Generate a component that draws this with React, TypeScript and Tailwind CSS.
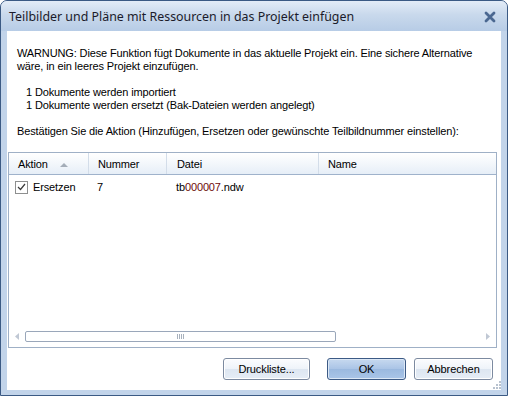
import React from "react";

const body = { fontFamily: '"Liberation Sans", Arial, sans-serif' };

function Btn({ label, def }: { label: string; def?: boolean }) {
  return (
    <div
      className={
        "w-[79px] h-[22px] flex items-center justify-center rounded-[3px] border text-[11px] text-black tracking-[-0.1px] " +
        (def
          ? "border-[#3c5a85] bg-[linear-gradient(#c7d9ef,#aac4e6_50%,#9bb9df_51%,#a9c5e8)] shadow-[inset_0_0_0_1px_#dce8f6]"
          : "border-[#7c8aa0] bg-[linear-gradient(#fbfcfe,#eef3f9_50%,#dde6f1_51%,#e6edf6)] shadow-[inset_0_0_0_1px_#ffffff]")
      }
    >
      {label}
    </div>
  );
}

export default function App() {
  return (
    <div className="w-[508px] h-[396px] bg-white" style={body}>
      <div className="w-[508px] h-[396px] flex flex-col rounded-t-[7px] border border-[#3b5a84] bg-[#c2d4ea] overflow-hidden">
        {/* title bar */}
        <div className="h-[30px] shrink-0 flex items-center justify-between pl-[8px] pr-[11px] bg-[linear-gradient(#e3ecf7,#c9d9ec_45%,#b7cce6)]">
          <span
            className="text-[12.4px] text-[#1b1b2a] pt-[2px]"
            style={{ fontFamily: '"Noto Sans", "Open Sans", sans-serif' }}
          >
            Teilbilder und Pläne mit Ressourcen in das Projekt einfügen
          </span>
          <svg width="12" height="12" viewBox="0 0 12 12" className="mt-[2px]">
            <path d="M2 2 L10 10 M10 2 L2 10" stroke="#4b6891" strokeWidth="2.8" strokeLinecap="round" />
          </svg>
        </div>
        {/* content */}
        <div className="flex-1 mx-[6px] mb-[5px] bg-white flex flex-col relative">
          <div className="pt-[16px] pl-[10px] text-[11px] leading-[13px] text-black tracking-[-0.13px]">
            <div>WARNUNG: Diese Funktion fügt Dokumente in das aktuelle Projekt ein. Eine sichere Alternative</div>
            <div>wäre, in ein leeres Projekt einzufügen.</div>
            <div className="h-[13px]" />
            <div className="pl-[9px]">1 Dokumente werden importiert</div>
            <div className="pl-[9px]">1 Dokumente werden ersetzt (Bak-Dateien werden angelegt)</div>
            <div className="h-[13px]" />
            <div>Bestätigen Sie die Aktion (Hinzufügen, Ersetzen oder gewünschte Teilbildnummer einstellen):</div>
          </div>
          {/* list */}
          <div className="mt-[14px] ml-[1px] mr-[4px] h-[196px] border border-[#9fb0c6] flex flex-col text-[11px] text-black tracking-[-0.13px]">
            <div className="h-[22px] flex border-b border-[#9fb2cb] bg-[linear-gradient(#ffffff,#f3f7fb_50%,#e6eef7)] text-[11px]">
              <div className="w-[80px] flex items-center pt-[2px] pl-[9px] border-r border-[#d3dde9] relative">
                Aktion
                <svg width="8" height="4" viewBox="0 0 8 4" className="absolute left-[51px] top-[10px]">
                  <path d="M0 4 L4 0 L8 4 Z" fill="#a4adb8" />
                </svg>
              </div>
              <div className="w-[78px] flex items-center pt-[2px] pl-[9px] border-r border-[#d3dde9]">Nummer</div>
              <div className="w-[152px] flex items-center pt-[2px] pl-[10px] border-r border-[#d3dde9]">Datei</div>
              <div className="flex-1 flex items-center pt-[2px] pl-[9px]">Name</div>
            </div>
            <div className="h-[18px] mt-[3px] flex items-center">
              <div className="w-[80px] flex items-center pl-[6px]">
                <div className="w-[13px] h-[13px] border border-[#8e8f8f] bg-white flex items-center justify-center mr-[5px]">
                  <svg width="9" height="8" viewBox="0 0 9 8">
                    <path d="M1 4 L3.5 6.5 L8 1" stroke="#3a3a3a" strokeWidth="1.2" fill="none" />
                  </svg>
                </div>
                Ersetzen
              </div>
              <div className="w-[78px] pl-[8px]">7</div>
              <div className="w-[152px] pl-[9px]">
                tb<span className="text-[#6e0a0a]">000007</span>.ndw
              </div>
            </div>
            <div className="flex-1" />
            {/* scrollbar */}
            <div className="h-[17px] mb-[2px] flex items-center px-[6px]">
              <svg width="4" height="7" viewBox="0 0 4 7">
                <path d="M4 0 L0 3.5 L4 7 Z" fill="#c0c8d4" />
              </svg>
              <div className="ml-[6px] w-[311px] h-[11px] rounded-[2px] border border-[#9aa7ba] bg-white flex items-center justify-center">
                <div className="flex gap-[1px]">
                  <div className="w-[1px] h-[5px] bg-[#a8b1bd]" />
                  <div className="w-[1px] h-[5px] bg-[#a8b1bd]" />
                  <div className="w-[1px] h-[5px] bg-[#a8b1bd]" />
                  <div className="w-[1px] h-[5px] bg-[#a8b1bd]" />
                </div>
              </div>
              <div className="flex-1" />
              <svg width="4" height="7" viewBox="0 0 4 7">
                <path d="M0 0 L4 3.5 L0 7 Z" fill="#c0c8d4" />
              </svg>
            </div>
          </div>
          {/* buttons */}
          <div className="mt-[10px] flex justify-end gap-[8px] pr-[8px]">
            <div className="w-[87px] mr-[9px] h-[22px] flex items-center justify-center rounded-[3px] border border-[#7c8aa0] bg-[linear-gradient(#fbfcfe,#eef3f9_50%,#dde6f1_51%,#e6edf6)] shadow-[inset_0_0_0_1px_#ffffff] text-[11px] tracking-[-0.1px]">
              Druckliste...
            </div>
            <Btn label="OK" def />
            <Btn label="Abbrechen" />
          </div>
          {/* grip */}
          <svg width="8" height="8" viewBox="0 0 8 8" className="absolute right-[0px] bottom-[1px]">
            {[[6, 0], [6, 3], [3, 3], [6, 6], [3, 6], [0, 6]].map(([x, y], i) => (
              <rect key={i} x={x} y={y} width="2" height="2" fill="#b8c2cf" />
            ))}
          </svg>
        </div>
      </div>
    </div>
  );
}
